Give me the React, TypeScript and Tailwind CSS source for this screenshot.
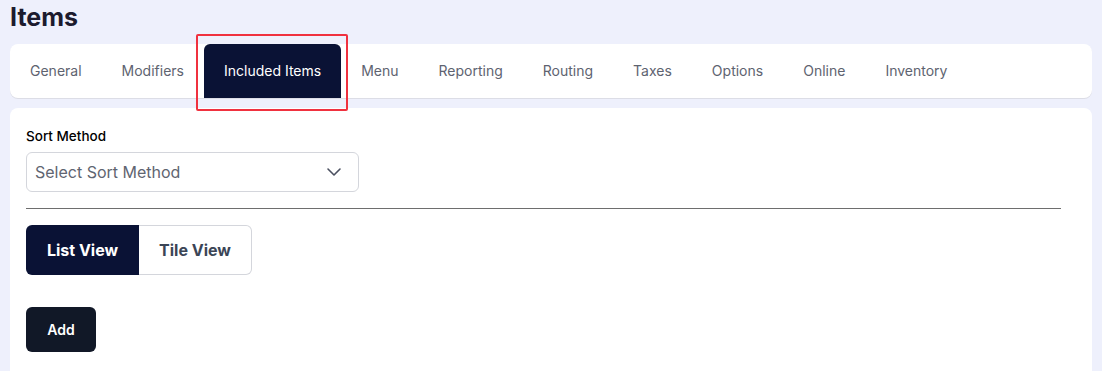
import { ChevronDown } from "lucide-react";

const tabs = [
  "General",
  "Modifiers",
  "Included Items",
  "Menu",
  "Reporting",
  "Routing",
  "Taxes",
  "Options",
  "Online",
  "Inventory",
];

const ACTIVE = "Included Items";

export default function App() {
  return (
    <div className="min-h-screen bg-[#eef0fc] px-[10px] pt-px font-['Inter',sans-serif]">
      <h1 className="text-[25px] font-bold leading-8 text-[#1c1b2e]">
        Items
      </h1>

      {/* tab bar */}
      <div className="mt-[11px] flex h-[54px] rounded-lg bg-white shadow-[0_1px_0_#dcdde6]">
        {tabs.map((t) =>
          t === ACTIVE ? (
            <div key={t} className="relative">
              <button className="flex h-full items-center rounded-t-md bg-[#0a1235] px-5 text-sm text-white">
                {t}
              </button>
              {/* highlight annotation */}
              <div className="pointer-events-none absolute -left-2 -top-[10px] h-[77px] w-[152px] rounded-[2px] border-2 border-[#f0313f]" />
            </div>
          ) : (
            <button
              key={t}
              className="flex h-full items-center px-5 text-sm text-[#5e6370]"
            >
              {t}
            </button>
          )
        )}
      </div>

      {/* content */}
      <div className="mt-[10px] rounded-t-lg bg-white px-4 pb-[19px] pt-[18px]">
        <label className="block text-[13.5px] font-medium leading-5 text-black">
          Sort Method
        </label>
        <div className="mt-[6px] flex h-10 w-[333px] items-center justify-between rounded-md border border-[#d4d6dc] pl-2 pr-3">
          <span className="text-base text-[#5f6571]">Select Sort Method</span>
          <ChevronDown size={24} strokeWidth={1.6} className="text-[#4b5060]" />
        </div>

        <div className="mr-[15px] mt-4 border-t border-[#6e6e6e]" />

        <div className="mt-4 flex">
          <button className="h-[50px] w-[113px] rounded-l-md bg-[#0a1235] text-base font-bold text-white">
            List View
          </button>
          <button className="h-[50px] w-[113px] rounded-r-md border border-l-0 border-[#d4d6dc] bg-white text-base font-bold text-[#3b4556]">
            Tile View
          </button>
        </div>

        <button className="mt-8 h-[45px] w-[70px] rounded-md bg-[#111827] text-sm font-semibold text-white">
          Add
        </button>
      </div>
    </div>
  );
}
